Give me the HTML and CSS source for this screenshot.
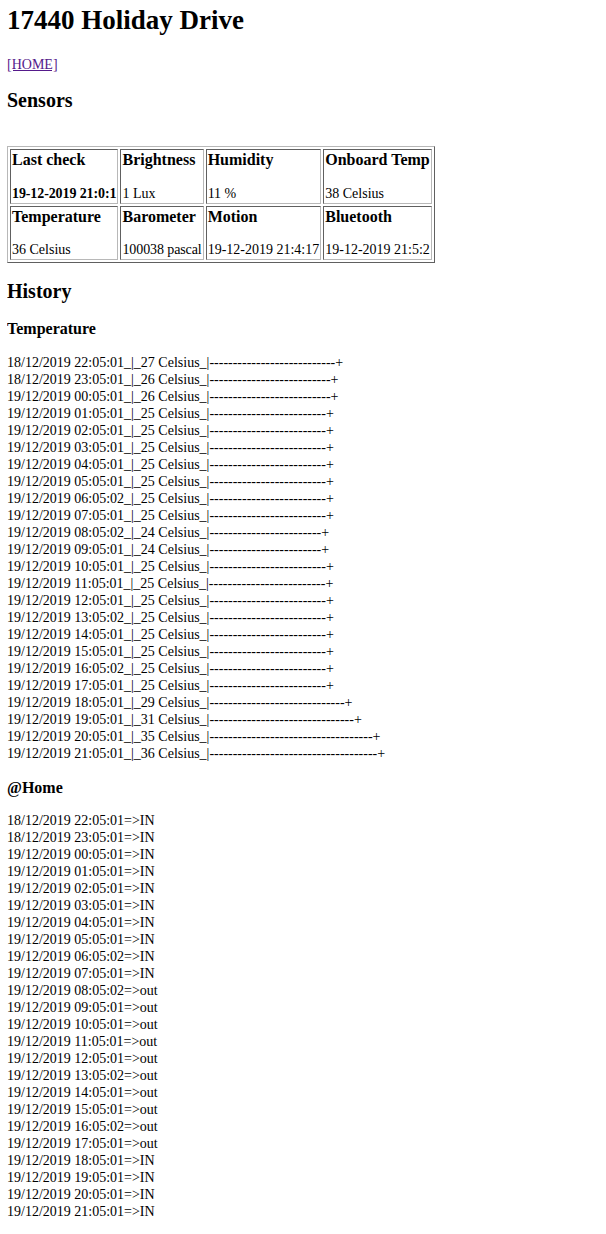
FILE: index.html
```html
<!DOCTYPE html>
<html>
<head>
<meta charset="utf-8">
<title>17440 Holiday Drive</title>
<link rel="stylesheet" href="styles.css">
</head>
<body class="page">
<h1 class="title">17440 Holiday Drive</h1>
<p class="nav"><a class="home-link" href="#">[HOME]</a></p>
<h2 class="section sensors-title">Sensors</h2>
<table class="sensors">
<tr>
<td class="cell"><b class="label">Last check</b><b class="value tight">19-12-2019 21:0:1</b></td>
<td class="cell"><b class="label">Brightness</b><span class="value">1 Lux</span></td>
<td class="cell"><b class="label">Humidity</b><span class="value">11 %</span></td>
<td class="cell"><b class="label">Onboard Temp</b><span class="value">38 Celsius</span></td>
</tr>
<tr>
<td class="cell"><b class="label">Temperature</b><span class="value">36 Celsius</span></td>
<td class="cell"><b class="label">Barometer</b><span class="value tight">100038 pascal</span></td>
<td class="cell"><b class="label">Motion</b><span class="value">19-12-2019 21:4:17</span></td>
<td class="cell"><b class="label">Bluetooth</b><span class="value">19-12-2019 21:5:2</span></td>
</tr>
</table>
<h2 class="section history-title">History</h2>
<h3 class="sub">Temperature</h3>
<p class="log temp-log">
18/12/2019 22:05:01_|_27 Celsius_|---------------------------+<br>
18/12/2019 23:05:01_|_26 Celsius_|--------------------------+<br>
19/12/2019 00:05:01_|_26 Celsius_|--------------------------+<br>
19/12/2019 01:05:01_|_25 Celsius_|-------------------------+<br>
19/12/2019 02:05:01_|_25 Celsius_|-------------------------+<br>
19/12/2019 03:05:01_|_25 Celsius_|-------------------------+<br>
19/12/2019 04:05:01_|_25 Celsius_|-------------------------+<br>
19/12/2019 05:05:01_|_25 Celsius_|-------------------------+<br>
19/12/2019 06:05:02_|_25 Celsius_|-------------------------+<br>
19/12/2019 07:05:01_|_25 Celsius_|-------------------------+<br>
19/12/2019 08:05:02_|_24 Celsius_|------------------------+<br>
19/12/2019 09:05:01_|_24 Celsius_|------------------------+<br>
19/12/2019 10:05:01_|_25 Celsius_|-------------------------+<br>
19/12/2019 11:05:01_|_25 Celsius_|-------------------------+<br>
19/12/2019 12:05:01_|_25 Celsius_|-------------------------+<br>
19/12/2019 13:05:02_|_25 Celsius_|-------------------------+<br>
19/12/2019 14:05:01_|_25 Celsius_|-------------------------+<br>
19/12/2019 15:05:01_|_25 Celsius_|-------------------------+<br>
19/12/2019 16:05:02_|_25 Celsius_|-------------------------+<br>
19/12/2019 17:05:01_|_25 Celsius_|-------------------------+<br>
19/12/2019 18:05:01_|_29 Celsius_|-----------------------------+<br>
19/12/2019 19:05:01_|_31 Celsius_|-------------------------------+<br>
19/12/2019 20:05:01_|_35 Celsius_|-----------------------------------+<br>
19/12/2019 21:05:01_|_36 Celsius_|------------------------------------+
</p>
<h3 class="sub home-title">@Home</h3>
<p class="log home-log">
18/12/2019 22:05:01=&gt;IN<br>
18/12/2019 23:05:01=&gt;IN<br>
19/12/2019 00:05:01=&gt;IN<br>
19/12/2019 01:05:01=&gt;IN<br>
19/12/2019 02:05:01=&gt;IN<br>
19/12/2019 03:05:01=&gt;IN<br>
19/12/2019 04:05:01=&gt;IN<br>
19/12/2019 05:05:01=&gt;IN<br>
19/12/2019 06:05:02=&gt;IN<br>
19/12/2019 07:05:01=&gt;IN<br>
19/12/2019 08:05:02=&gt;out<br>
19/12/2019 09:05:01=&gt;out<br>
19/12/2019 10:05:01=&gt;out<br>
19/12/2019 11:05:01=&gt;out<br>
19/12/2019 12:05:01=&gt;out<br>
19/12/2019 13:05:02=&gt;out<br>
19/12/2019 14:05:01=&gt;out<br>
19/12/2019 15:05:01=&gt;out<br>
19/12/2019 16:05:02=&gt;out<br>
19/12/2019 17:05:01=&gt;out<br>
19/12/2019 18:05:01=&gt;IN<br>
19/12/2019 19:05:01=&gt;IN<br>
19/12/2019 20:05:01=&gt;IN<br>
19/12/2019 21:05:01=&gt;IN
</p>
</body>
</html>
```

FILE: styles.css
```css
html, body {
  background: #fff;
}
.page {
  margin: 0 8px 8px 7px;
  font-family: "Liberation Serif", "Times New Roman", serif;
  font-size: 14px;
  line-height: 17px;
  color: #000;
}
.title {
  font-size: 27px;
  line-height: 31px;
  font-weight: bold;
  margin: 5px 0 0;
}
.nav {
  margin: 20px 0 0;
}
.home-link {
  color: #551a8b;
  text-decoration: underline;
}
.section {
  font-size: 20px;
  line-height: 23px;
  font-weight: bold;
  margin: 0;
}
.sensors-title {
  margin-top: 16px;
}
.sensors {
  border-collapse: separate;
  border-spacing: 2px;
  border: 1px solid;
  border-color: #b8b8b8 #606060 #606060 #b8b8b8;
  margin-top: 34px;
}
.cell {
  padding: 1px;
  vertical-align: top;
  border: 1px solid;
  border-color: #606060 #b8b8b8 #b8b8b8 #606060;
  white-space: nowrap;
}
.label {
  display: block;
  font-size: 16px;
  line-height: 18px;
}
.value {
  display: block;
  margin-top: 15.5px;
  line-height: 17px;
}
.tight {
  letter-spacing: -0.1px;
}
.history-title {
  margin-top: 17px;
}
.sub {
  font-size: 16px;
  line-height: 18px;
  font-weight: bold;
  margin: 17px 0 0;
}
.home-title {
  margin-top: 17px;
}
.log {
  margin: 16px 0 0;
}
.home-log {
  margin-top: 15px;
}
```
